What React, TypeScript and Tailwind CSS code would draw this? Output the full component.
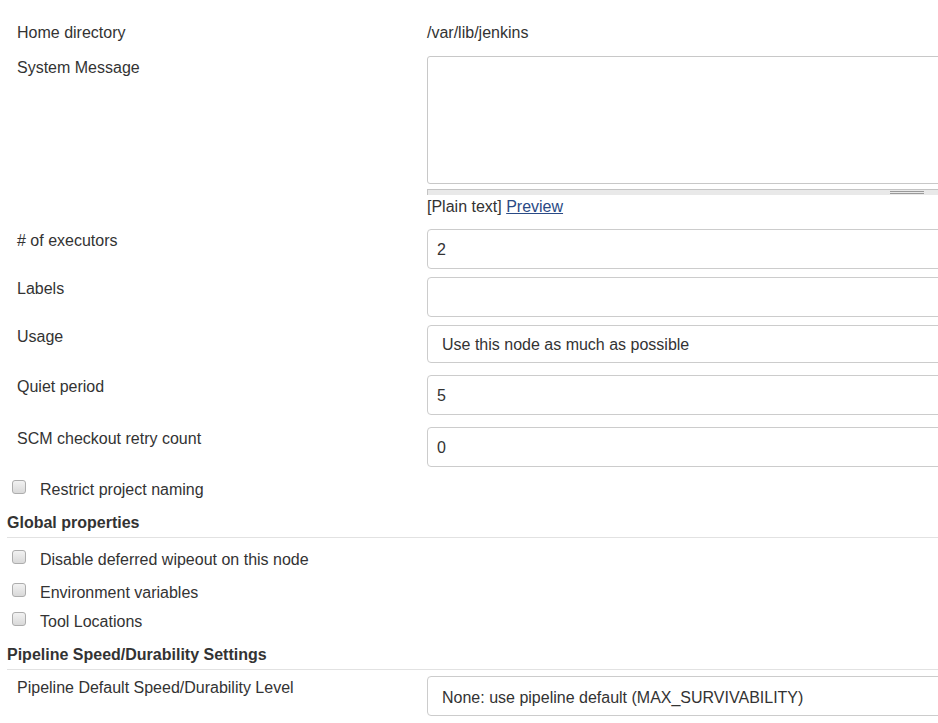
const labelCls = "pt-[3px] leading-[18px]";
const boxCls =
    "flex h-10 w-[540px] items-center rounded-[4px] border border-[#cccccc] bg-white pt-[2px]";

const Checkbox = () => (
    <span className="mt-[-1px] block h-[14px] w-[14px] shrink-0 rounded-[3px] border border-[#adadad] bg-gradient-to-b from-[#f2f2f2] to-[#d9d9d9]" />
);

const CheckRow = ({ label, className }: { label: string; className: string }) => (
    <div className={`flex items-start pl-[12px] leading-[18px] ${className}`}>
        <Checkbox />
        <span className="ml-[14px]">{label}</span>
    </div>
);

const Heading = ({ title, className }: { title: string; className: string }) => (
    <div
        className={`ml-[7px] border-b border-[#e2e2e2] pb-[5px] font-bold leading-[18px] ${className}`}
    >
        {title}
    </div>
);

const FieldRow = ({
    label,
    className,
    children,
}: {
    label: string;
    className: string;
    children: React.ReactNode;
}) => (
    <div className={`grid grid-cols-[410px_540px] pl-[17px] ${className}`}>
        <div className={labelCls}>{label}</div>
        <div>{children}</div>
    </div>
);

const App = () => {
    return (
        <div className="h-[723px] w-[938px] overflow-hidden bg-white pt-[24px] font-['Liberation_Sans',Arial,sans-serif] text-[16px] text-[#333333]">
            <div className="grid grid-cols-[410px_540px] pl-[17px] leading-[18px]">
                <div>Home directory</div>
                <div>/var/lib/jenkins</div>
            </div>

            <FieldRow label="System Message" className="mt-[14px]">
                <div className="h-[128px] w-[540px] rounded-[3px] border border-[#c8c8c8] bg-white" />
                <div className="relative mt-[5px] h-[6px] w-[540px] border-t border-l border-[#c4c4c4] bg-[#e9e9e9]">
                    <div className="absolute top-[1px] left-[462px] h-[3px] w-[34px] border-y border-[#9a9a9a]" />
                </div>
                <div className="mt-[3px] leading-[18px]">
                    [Plain text]{" "}
                    <a href="#" className="text-[#2a4a85] underline">
                        Preview
                    </a>
                </div>
            </FieldRow>

            <FieldRow label="# of executors" className="mt-[13px]">
                <div className={`${boxCls} pl-[9px]`}>2</div>
            </FieldRow>

            <FieldRow label="Labels" className="mt-[8px]">
                <div className={boxCls} />
            </FieldRow>

            <FieldRow label="Usage" className="mt-[8px]">
                <div className={`${boxCls} !h-[38px] pl-[14px]`}>
                    Use this node as much as possible
                </div>
            </FieldRow>

            <FieldRow label="Quiet period" className="mt-[12px]">
                <div className={`${boxCls} pl-[9px]`}>5</div>
            </FieldRow>

            <FieldRow label="SCM checkout retry count" className="mt-[12px]">
                <div className={`${boxCls} pl-[9px]`}>0</div>
            </FieldRow>

            <CheckRow label="Restrict project naming" className="mt-[14px]" />

            <Heading title="Global properties" className="mt-[15px]" />

            <CheckRow label="Disable deferred wipeout on this node" className="mt-[13px]" />
            <CheckRow label="Environment variables" className="mt-[15px]" />
            <CheckRow label="Tool Locations" className="mt-[11px]" />

            <Heading title="Pipeline Speed/Durability Settings" className="mt-[15px]" />

            <FieldRow label="Pipeline Default Speed/Durability Level" className="mt-[6px]">
                <div className={`${boxCls} pl-[14px] !pt-[4px]`}>
                    None: use pipeline default (MAX_SURVIVABILITY)
                </div>
            </FieldRow>
        </div>
    );
};

export default App;
